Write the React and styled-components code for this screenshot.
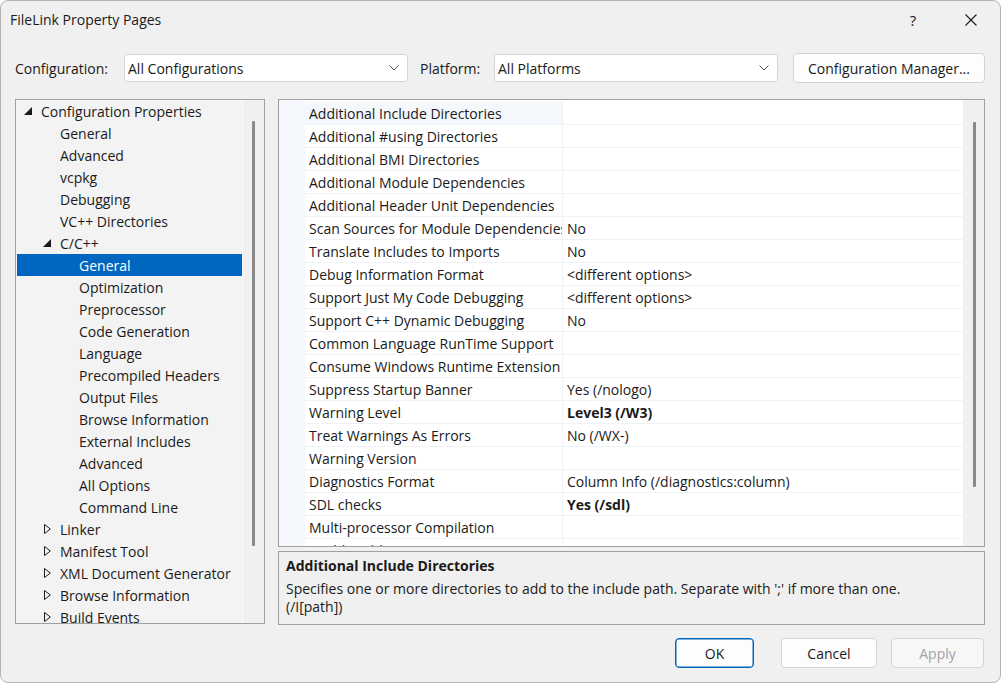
import React from 'react'
import styled, { createGlobalStyle } from 'styled-components'

const GlobalStyle = createGlobalStyle`
  html, body {
    margin: 0;
    padding: 0;
    background: #ffffff;
  }
  * { box-sizing: border-box; }
  body {
    font-family: "Open Sans", "Noto Sans", sans-serif;
    font-size: 14px;
    color: #1a1a1a;
  }
`

const treeItems = [
  { label: 'Configuration Properties', level: 0, arrow: 'open' },
  { label: 'General', level: 1 },
  { label: 'Advanced', level: 1 },
  { label: 'vcpkg', level: 1 },
  { label: 'Debugging', level: 1 },
  { label: 'VC++ Directories', level: 1 },
  { label: 'C/C++', level: 1, arrow: 'open' },
  { label: 'General', level: 2, selected: true },
  { label: 'Optimization', level: 2 },
  { label: 'Preprocessor', level: 2 },
  { label: 'Code Generation', level: 2 },
  { label: 'Language', level: 2 },
  { label: 'Precompiled Headers', level: 2 },
  { label: 'Output Files', level: 2 },
  { label: 'Browse Information', level: 2 },
  { label: 'External Includes', level: 2 },
  { label: 'Advanced', level: 2 },
  { label: 'All Options', level: 2 },
  { label: 'Command Line', level: 2 },
  { label: 'Linker', level: 1, arrow: 'closed' },
  { label: 'Manifest Tool', level: 1, arrow: 'closed' },
  { label: 'XML Document Generator', level: 1, arrow: 'closed' },
  { label: 'Browse Information', level: 1, arrow: 'closed' },
  { label: 'Build Events', level: 1, arrow: 'closed' },
]

const props = [
  { name: 'Additional Include Directories', value: '', current: true },
  { name: 'Additional #using Directories', value: '' },
  { name: 'Additional BMI Directories', value: '' },
  { name: 'Additional Module Dependencies', value: '' },
  { name: 'Additional Header Unit Dependencies', value: '' },
  { name: 'Scan Sources for Module Dependencies', value: 'No' },
  { name: 'Translate Includes to Imports', value: 'No' },
  { name: 'Debug Information Format', value: '<different options>' },
  { name: 'Support Just My Code Debugging', value: '<different options>' },
  { name: 'Support C++ Dynamic Debugging', value: 'No' },
  { name: 'Common Language RunTime Support', value: '' },
  { name: 'Consume Windows Runtime Extension', value: '' },
  { name: 'Suppress Startup Banner', value: 'Yes (/nologo)' },
  { name: 'Warning Level', value: 'Level3 (/W3)', bold: true },
  { name: 'Treat Warnings As Errors', value: 'No (/WX-)' },
  { name: 'Warning Version', value: '' },
  { name: 'Diagnostics Format', value: 'Column Info (/diagnostics:column)' },
  { name: 'SDL checks', value: 'Yes (/sdl)', bold: true },
  { name: 'Multi-processor Compilation', value: '' },
  { name: 'Enable Address Sanitizer', value: 'No' },
]

const Window = styled.div`
  width: 1001px;
  height: 683px;
  background: #f0f0f0;
  border: 1px solid #b4b4b4;
  border-radius: 8px;
  display: flex;
  flex-direction: column;
  padding: 0 15px 0 14px;
  overflow: hidden;
`

const TitleBar = styled.div`
  height: 37px;
  display: flex;
  align-items: center;
  margin: 0 -15px 0 -14px;
  padding-left: 9px;
`

const Title = styled.div`
  flex: 1;
  color: #1a1a1a;
`

const CaptionButton = styled.div`
  width: 58px;
  height: 37px;
  display: flex;
  align-items: center;
  justify-content: center;
  font-size: 15px;
  color: #1a1a1a;
`

const Toolbar = styled.div`
  margin-top: 15px;
  height: 30px;
  display: flex;
  align-items: center;
`

const Label = styled.span`
  width: ${p => p.width}px;
  white-space: nowrap;
`

const Select = styled.div`
  width: ${p => p.width}px;
  height: 28px;
  background: #ffffff;
  border: 1px solid #d6d6d6;
  border-radius: 3px;
  display: flex;
  align-items: center;
  padding: 0 8px 0 3px;
  margin-right: ${p => p.gap}px;
  span { flex: 1; }
`

const Button = styled.div`
  width: ${p => p.width}px;
  height: 30px;
  display: flex;
  align-items: center;
  justify-content: center;
  background: ${p => (p.disabled ? '#f7f7f7' : '#fdfdfd')};
  border: 1px solid ${p => (p.primary ? '#0067c0' : '#d4d4d4')};
  border-radius: 4px;
  color: ${p => (p.disabled ? '#a2a2a2' : '#1a1a1a')};
  margin-left: ${p => p.gap || 0}px;
  ${p => (p.primary ? 'box-shadow: inset 0 0 0 0.5px #0067c0;' : '')}
`

const Body = styled.div`
  margin-top: 16px;
  height: 527px;
  display: flex;
  align-items: flex-start;
  gap: 13px;
`

const Tree = styled.div`
  width: 250px;
  height: 525px;
  border: 1px solid #a0a0a0;
  background: #f3f3f3;
  display: flex;
  overflow: hidden;
`

const TreeList = styled.div`
  flex: 1;
  padding: 0 0 0 1px;
  border-right: 1px solid #fbfbfb;
`

const TreeRow = styled.div`
  height: 22px;
  display: flex;
  align-items: center;
  padding-left: ${p => 5 + p.level * 19}px;
  background: ${p => (p.selected ? '#0067c0' : 'transparent')};
  color: ${p => (p.selected ? '#ffffff' : '#1a1a1a')};
  white-space: nowrap;
`

const ArrowBox = styled.span`
  width: 19px;
  display: inline-flex;
  align-items: center;
  justify-content: flex-start;
  padding-left: ${p => (p.open ? 2 : 3)}px;
`

const ScrollTrack = styled.div`
  width: ${p => p.width}px;
  background: #f0f0f0;
  display: flex;
  justify-content: center;
  padding-top: ${p => p.top}px;
  padding-left: ${p => p.shift || 0}px;
`

const Thumb = styled.div`
  width: 3px;
  height: ${p => p.height}px;
  background: #8a8a8a;
  border-radius: 1px;
`

const Right = styled.div`
  width: 707px;
  height: 527px;
  display: flex;
  flex-direction: column;
`

const Grid = styled.div`
  height: 448px;
  border: 1px solid #a0a0a0;
  background: #ffffff;
  display: flex;
  overflow: hidden;
`

const Gutter = styled.div`
  width: 26px;
  background: #f4f7fb;
`

const Rows = styled.div`
  flex: 1;
  padding-top: 2px;
`

const PropRow = styled.div`
  height: 23px;
  display: grid;
  grid-template-columns: 258px 1fr;
  border-bottom: 1px solid #f1f2f6;
`

const NameCell = styled.div`
  padding-left: 4px;
  display: flex;
  align-items: center;
  white-space: nowrap;
  overflow: hidden;
  background: ${p => (p.current ? '#f4f7fb' : '#ffffff')};
  border-right: 1px solid #f1f2f6;
`

const ValueCell = styled.div`
  padding-left: 4px;
  display: flex;
  align-items: center;
  white-space: nowrap;
  font-weight: ${p => (p.bold ? 700 : 400)};
`

const Description = styled.div`
  margin-top: 4px;
  height: 74px;
  border: 1px solid #a0a0a0;
  padding: 5px 7px;
  line-height: 18px;
  h4 {
    margin: 0 0 5px;
    font-size: 14px;
    font-weight: 700;
  }
  p { margin: 0; }
`

const Footer = styled.div`
  margin-top: 12px;
  display: flex;
  justify-content: flex-end;
  padding-right: 1px;
`

const Chevron = () => (
  <svg width="10" height="6" viewBox="0 0 10 6">
    <path d="M0.5 0.5 L5 5 L9.5 0.5" fill="none" stroke="#555" strokeWidth="1" />
  </svg>
)

const OpenArrow = ({ selected }) => (
  <svg width="8" height="8" viewBox="0 0 8 8">
    <path d="M8 0 L8 8 L0 8 Z" fill={selected ? '#fff' : '#1a1a1a'} />
  </svg>
)

const ClosedArrow = () => (
  <svg width="7" height="10" viewBox="0 0 7 10">
    <path d="M0.5 0.5 L6.3 5 L0.5 9.5 Z" fill="none" stroke="#1a1a1a" strokeWidth="1" />
  </svg>
)

const CloseIcon = () => (
  <svg width="12" height="12" viewBox="0 0 12 12">
    <path d="M0.5 0.5 L11.5 11.5 M11.5 0.5 L0.5 11.5" stroke="#1a1a1a" strokeWidth="1.1" />
  </svg>
)

const App = () => {
  return (
    <>
      <GlobalStyle />
      <Window>
        <TitleBar>
          <Title>FileLink Property Pages</Title>
          <CaptionButton>?</CaptionButton>
          <CaptionButton><CloseIcon /></CaptionButton>
        </TitleBar>

        <Toolbar>
          <Label width={109}>Configuration:</Label>
          <Select width={284} gap={12}>
            <span>All Configurations</span>
            <Chevron />
          </Select>
          <Label width={74}>Platform:</Label>
          <Select width={284} gap={15}>
            <span>All Platforms</span>
            <Chevron />
          </Select>
          <Button width={192}>Configuration Manager...</Button>
        </Toolbar>

        <Body>
          <Tree>
            <TreeList>
              {treeItems.map((item, i) => (
                <TreeRow key={i} level={item.level} selected={item.selected}>
                  <ArrowBox open={item.arrow === 'open'}>
                    {item.arrow === 'open' && <OpenArrow selected={item.selected} />}
                    {item.arrow === 'closed' && <ClosedArrow />}
                  </ArrowBox>
                  {item.label}
                </TreeRow>
              ))}
            </TreeList>
            <ScrollTrack width={21} top={21} shift={0}>
              <Thumb height={425} />
            </ScrollTrack>
          </Tree>

          <Right>
            <Grid>
              <Gutter />
              <Rows>
                {props.map((p, i) => (
                  <PropRow key={i}>
                    <NameCell current={p.current}>{p.name}</NameCell>
                    <ValueCell bold={p.bold}>{p.value}</ValueCell>
                  </PropRow>
                ))}
              </Rows>
              <ScrollTrack width={21} top={22} shift={1}>
                <Thumb height={365} />
              </ScrollTrack>
            </Grid>
            <Description>
              <h4>Additional Include Directories</h4>
              <p>Specifies one or more directories to add to the include path. Separate with ';' if more than one.</p>
              <p>(/I[path])</p>
            </Description>
          </Right>
        </Body>

        <Footer>
          <Button width={79} primary>OK</Button>
          <Button width={96} gap={27}>Cancel</Button>
          <Button width={93} gap={14} disabled>Apply</Button>
        </Footer>
      </Window>
    </>
  )
}

export default App
